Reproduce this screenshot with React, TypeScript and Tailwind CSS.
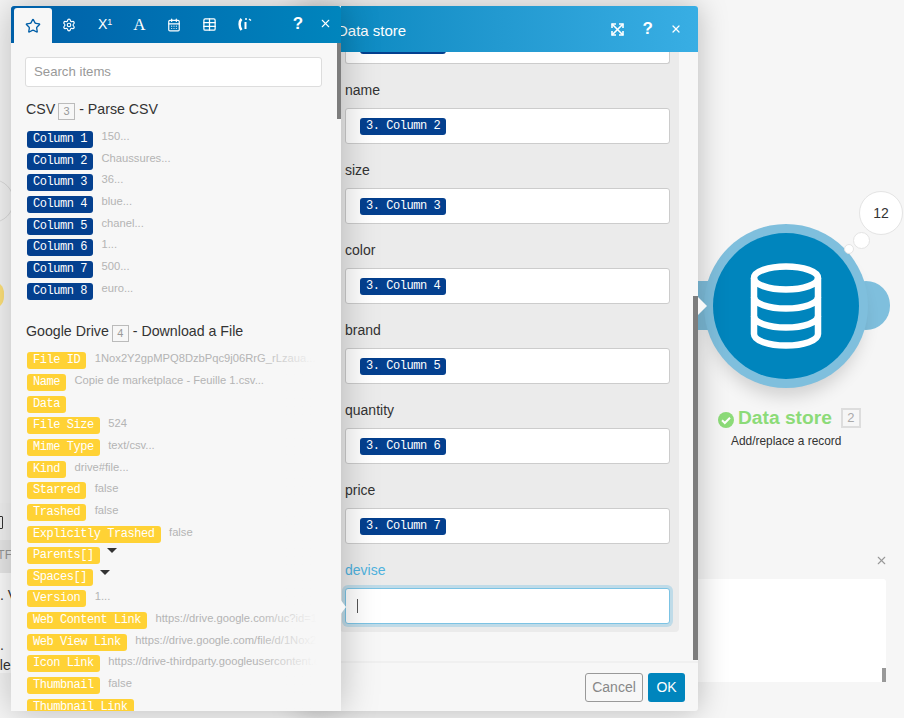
import { Star, Settings, CalendarDays, Table, X } from 'lucide-react';

const csvRows = [
  ['Column 1', '150...'],
  ['Column 2', 'Chaussures...'],
  ['Column 3', '36...'],
  ['Column 4', 'blue...'],
  ['Column 5', 'chanel...'],
  ['Column 6', '1...'],
  ['Column 7', '500...'],
  ['Column 8', 'euro...'],
];

const driveRows: [string, string][] = [
  ['File ID', '1Nox2Y2gpMPQ8DzbPqc9j06RrG_rLzaua...'],
  ['Name', 'Copie de marketplace - Feuille 1.csv...'],
  ['Data', ''],
  ['File Size', '524'],
  ['Mime Type', 'text/csv...'],
  ['Kind', 'drive#file...'],
  ['Starred', 'false'],
  ['Trashed', 'false'],
  ['Explicitly Trashed', 'false'],
  ['Parents[]', 'caret'],
  ['Spaces[]', 'caret'],
  ['Version', '1...'],
  ['Web Content Link', 'https://drive.google.com/uc?id=1Nox2Y2gpMPQ8'],
  ['Web View Link', 'https://drive.google.com/file/d/1Nox2Y2gpMPQ8'],
  ['Icon Link', 'https://drive-thirdparty.googleusercontent.com/16'],
  ['Thumbnail', 'false'],
  ['Thumbnail Link', ''],
];

const fields = [
  ['name', '3. Column 2'],
  ['size', '3. Column 3'],
  ['color', '3. Column 4'],
  ['brand', '3. Column 5'],
  ['quantity', '3. Column 6'],
  ['price', '3. Column 7'],
];

function Pill({ label, yellow }: { label: string; yellow?: boolean }) {
  return (
    <span
      className={`inline-block shrink-0 h-[17px] px-[6px] rounded-[3px] whitespace-pre text-[12px] tracking-[-0.45px] leading-[17px] font-['Liberation_Mono',monospace] ${
        yellow ? 'bg-[#ffd235] text-white' : 'bg-[#04408f] text-white'
      }`}
    >
      {label}
    </span>
  );
}

function ItemRow({ label, value, yellow }: { label: string; value: string; yellow?: boolean }) {
  return (
    <div className="flex items-start h-[21.67px]">
      <Pill label={label} yellow={yellow} />
      {value === 'caret' ? (
        <span className="ml-[7px] mt-[1px] w-0 h-0 border-x-[5px] border-x-transparent border-t-[5px] border-t-[#333]" />
      ) : (
        <span className={`ml-[8.5px] text-[11.2px] leading-[17px] text-[#b4b4b4] whitespace-nowrap ${yellow ? '-mt-[2px]' : '-mt-[3px]'}`}>
          {value}
        </span>
      )}
    </div>
  );
}

function ModuleNumber({ n }: { n: number }) {
  return (
    <span className="inline-block w-[17px] h-[17px] ml-[3px] mr-[4px] border border-[#bbb] text-[11px] leading-[15px] text-center text-[#999] align-[-1px]">
      {n}
    </span>
  );
}

function DataStoreGlyph() {
  return (
    <svg width="72" height="86" viewBox="0 0 72 86" fill="none" stroke="#fff" strokeWidth="6.5">
      <ellipse cx="36" cy="15" rx="32" ry="11.5" />
      <path d="M4 15v56c0 6.5 14.3 11.5 32 11.5S68 77.500 68 71V15" />
      <path d="M4 34c0 6.500 14.300 11.500 32 11.500S68 40.500 68 34" />
      <path d="M4 53c0 6.500 14.300 11.500 32 11.500S68 59.500 68 53" />
    </svg>
  );
}

export default function App() {
  return (
    <div className="relative w-[904px] h-[718px] overflow-hidden bg-[#f6f6f6] font-['Liberation_Sans',Arial,sans-serif] text-[#333]">
      {/* Canvas behind the dialogs */}
      <div className="absolute left-[-30px] top-[179px] w-[44px] h-[44px] rounded-full border border-[#ddd]" />
      <div className="absolute left-[-20px] top-[281px] w-[24px] h-[28px] rounded-full bg-[#ffe27a]" />
      <div className="absolute left-0 top-[503px] w-[12px] h-[37px] bg-[#f4f4f4]" />
      <div className="absolute left-[-3px] top-[516px] w-[6px] h-[13px] border border-[#333] rounded-[1px]" />
      <div className="absolute left-0 top-[540px] w-[12px] h-[33px] bg-[#ebebeb] text-[12px] leading-[30px] text-[#999] whitespace-nowrap overflow-hidden">
        <span className="-ml-[6px]">ITF</span>
      </div>
      <div className="absolute left-0 top-[573px] w-[12px] h-[100px] bg-white" />
      <div className="absolute left-0 top-[586px] w-[12px] text-[14px] leading-[18px] whitespace-nowrap overflow-hidden">. V</div>
      <div className="absolute left-0 top-[636px] w-[12px] text-[14px] leading-[18px]">.</div>
      <div className="absolute left-0 top-[656px] w-[12px] text-[14px] leading-[18px] overflow-hidden">
        <span className="-ml-[8px] inline-block">ple</span>
      </div>

      {/* Data store node */}
      <div className="absolute left-[698px] top-[281px] w-[48px] h-[49px] rounded-r-full bg-[#7fbfdd]" />
      <div className="absolute left-[842px] top-[281px] w-[48px] h-[49px] rounded-full bg-[#7fbfdd]" />
      <div className="absolute left-[704px] top-[224px] w-[164px] h-[164px] rounded-full bg-[#7fbfdd] shadow-[0_14px_18px_-6px_rgba(0,0,0,0.16)]" />
      <div className="absolute left-[713px] top-[233px] w-[146px] h-[146px] rounded-full bg-[#0085bd] flex items-center justify-center">
        <DataStoreGlyph />
      </div>
      <div className="absolute left-[859px] top-[191px] w-[44px] h-[44px] rounded-full bg-white border border-[#e4e4e4] flex items-center justify-center text-[14px] text-[#333]">
        12
      </div>
      <div className="absolute left-[853px] top-[232px] w-[17px] h-[17px] rounded-full bg-white border border-[#e4e4e4]" />
      <div className="absolute left-[844px] top-[244px] w-[10px] h-[10px] rounded-full bg-white border border-[#e4e4e4]" />
      <div className="absolute left-[718px] top-[407px] flex items-center w-[150px]">
        <svg width="16" height="16" viewBox="0 0 16 16" className="mt-[4px] mr-[4px]">
          <circle cx="8" cy="8" r="8" fill="#8cdb78" />
          <path d="M4 8.200l2.800 2.800L12 5.800" fill="none" stroke="#fff" strokeWidth="2" />
        </svg>
        <span className="text-[19.2px] leading-[22px] font-bold text-[#8cdb78]">Data store</span>
        <span className="ml-[9px] w-[20px] h-[20px] border-2 border-[#ddd] text-[13px] leading-[16px] text-center text-[#aaa]">2</span>
      </div>
      <div className="absolute left-[731px] top-[433px] text-[11.9px] leading-[16px] text-[#333]">Add/replace a record</div>

      {/* Notes panel */}
      <X size={13} className="absolute left-[875px] top-[554px] text-[#999]" />
      <div className="absolute left-[690px] top-[579px] w-[196px] h-[103px] bg-white rounded-[3px]">
        <div className="absolute right-0 bottom-0 w-[4px] h-[14px] bg-[#999]" />
      </div>

      {/* Data store dialog */}
      <div className="absolute left-[300px] top-[6px] w-[398px] h-[705px] bg-[#f7f7f7] rounded-[3px] shadow-[0_0_30px_rgba(0,0,0,0.25)] flex flex-col overflow-hidden">
        <div className="relative shrink-0 h-[46px] flex items-center pl-[37px] pr-[16px] bg-gradient-to-r from-[#0085bd] to-[#38aee4] text-white">
          <span className="text-[15px] leading-[46px] pt-[3px]">Data store</span>
          <svg width="13" height="13" viewBox="0 0 13 13" className="ml-auto" fill="none" stroke="#fff" strokeWidth="1.600">
            <path d="M1 1l11 11M12 1L1 12" />
            <path d="M1 5V1h4M8 1h4v4M12 8v4H8M5 12H1V8" />
          </svg>
          <span className="ml-[19px] text-[17px] font-bold">?</span>
          <X size={12} strokeWidth={2.500} className="ml-[17px]" />
        </div>
        <div className="relative flex-1 min-h-0 overflow-hidden">
          <div className="ml-[40px] w-[339px] h-[580px] bg-[#ebebeb] rounded-b-[4px]">
            <div className="ml-[5px] w-[325px] h-[12px] -mt-0 bg-white border border-[#ccc] border-t-0 rounded-b-[3px] relative">
              <div className="absolute left-[14px] -top-[1px] w-[86px] h-[3px] bg-[#04408f] rounded-b-[3px]" />
            </div>
            <div className="pl-[5px] w-[330px]">
              {fields.map(([label, value]) => (
                <div key={label} className="pt-[18px]">
                  <div className="text-[14px] leading-[16px] h-[26px] text-[#333]">{label}</div>
                  <div className="h-[36px] w-[325px] bg-white border border-[#ccc] rounded-[3px] flex items-center pl-[14px]">
                    <Pill label={value} />
                  </div>
                </div>
              ))}
              <div className="pt-[18px]">
                <div className="text-[14px] leading-[16px] h-[26px] text-[#4fb2de]">devise</div>
                <div className="relative h-[36px] w-[325px] bg-white border border-[#7cc3e4] rounded-[3px] shadow-[0_0_0_3px_rgba(124,195,228,0.4)] flex items-center pl-[11px]">
                  <div className="w-[1px] h-[14px] bg-[#555]" />
                </div>
              </div>
            </div>
          </div>
        </div>
        <div className="shrink-0 h-[50px] border-t-2 border-[#f0f0f0] flex items-center justify-end gap-[5px] pr-[13px]">
          <button className="w-[58px] h-[29px] border border-[#999] rounded-[3px] text-[14px] text-[#888] bg-[#f7f7f7]">Cancel</button>
          <button className="w-[37px] h-[29px] rounded-[3px] text-[14px] text-white bg-[#0085bd]">OK</button>
        </div>
      </div>

      {/* Item picker */}
      <div className="absolute left-[11px] top-[6px] w-[330px] h-[705px] bg-[#f7f7f7] shadow-[0_0_35px_rgba(0,0,0,0.25)] overflow-hidden flex flex-col">
        <div className="shrink-0 h-[37px] flex items-end bg-gradient-to-r from-[#005fa8] to-[#0085bd] rounded-t-[3px] text-white">
          <div className="ml-[3px] w-[38px] h-[35px] bg-[#f7f7f7] rounded-t-[3px] flex items-center justify-center">
            <Star size={16} strokeWidth={2} className="text-[#005fa8]" />
          </div>
          <div className="h-[37px] flex items-center">
            <Settings size={14} className="ml-[10px]" />
            <span className="ml-[22px] text-[14px] font-medium">X<sup className="text-[9px]">1</sup></span>
            <span className="ml-[21px] text-[17px] font-['Liberation_Serif',serif]">A</span>
            <CalendarDays size={14} className="ml-[21px]" />
            <Table size={15} className="ml-[21px]" />
            <svg width="14" height="15" viewBox="0 0 14 15" className="ml-[21px]" fill="none" stroke="#fff">
              <path d="M3.500 2C1 4.500 1 10 3.500 13" strokeWidth="2.500" />
              <path d="M7.500 5v7" strokeWidth="2" />
              <circle cx="8" cy="2" r="1" fill="#fff" stroke="none" />
              <path d="M11 2l2 1.500" strokeWidth="1.500" />
            </svg>
            <span className="ml-[41px] -mt-[2px] text-[17px] font-bold">?</span>
            <X size={13} strokeWidth={2} className="ml-[16px] -mt-[2px]" />
          </div>
        </div>
        <div className="relative flex-1 min-h-0 overflow-hidden">
          <div className="pl-[14px] pr-[19px] pt-[14px]">
            <div className="h-[30px] w-[297px] bg-white border border-[#ddd] rounded-[3px] flex items-center px-[8px] pb-[1px] text-[13.2px] text-[#999]">
              Search items
            </div>
            <div className="mt-[12px] pl-[1px] text-[14.2px] leading-[20px] text-[#333]">
              CSV<ModuleNumber n={3} />- Parse CSV
            </div>
            <div className="mt-[11px] pl-[2px]">
              {csvRows.map(([label, value]) => (
                <ItemRow key={label} label={label} value={value} />
              ))}
            </div>
            <div className="mt-[17px] pl-[1px] text-[14.2px] leading-[20px] text-[#333]">
              Google Drive<ModuleNumber n={4} />- Download a File
            </div>
            <div className="relative mt-[10px] pl-[2px] w-[292px] overflow-hidden">
              {driveRows.map(([label, value]) => (
                <ItemRow key={label} label={label} value={value} yellow />
              ))}
              <div className="absolute right-0 top-0 bottom-0 w-[60px] bg-gradient-to-r from-transparent to-[#f7f7f7]" />
            </div>
          </div>
          <div className="absolute right-0 top-0 w-[4px] h-[76px] bg-[#7d7d7d]" />
        </div>
      </div>

      {/* Mapping arrows */}
      <div className="absolute left-[340px] top-[599px] w-0 h-0 border-y-[8px] border-y-transparent border-l-[6px] border-l-[#f7f7f7]" />
      <div className="absolute left-[698px] top-[297px] w-0 h-0 border-y-[9px] border-y-transparent border-l-[9px] border-l-[#f7f7f7]" />
      <div className="absolute left-[693px] top-[296px] w-[5px] h-[364px] bg-[#7d7d7d]" />
    </div>
  );
}
